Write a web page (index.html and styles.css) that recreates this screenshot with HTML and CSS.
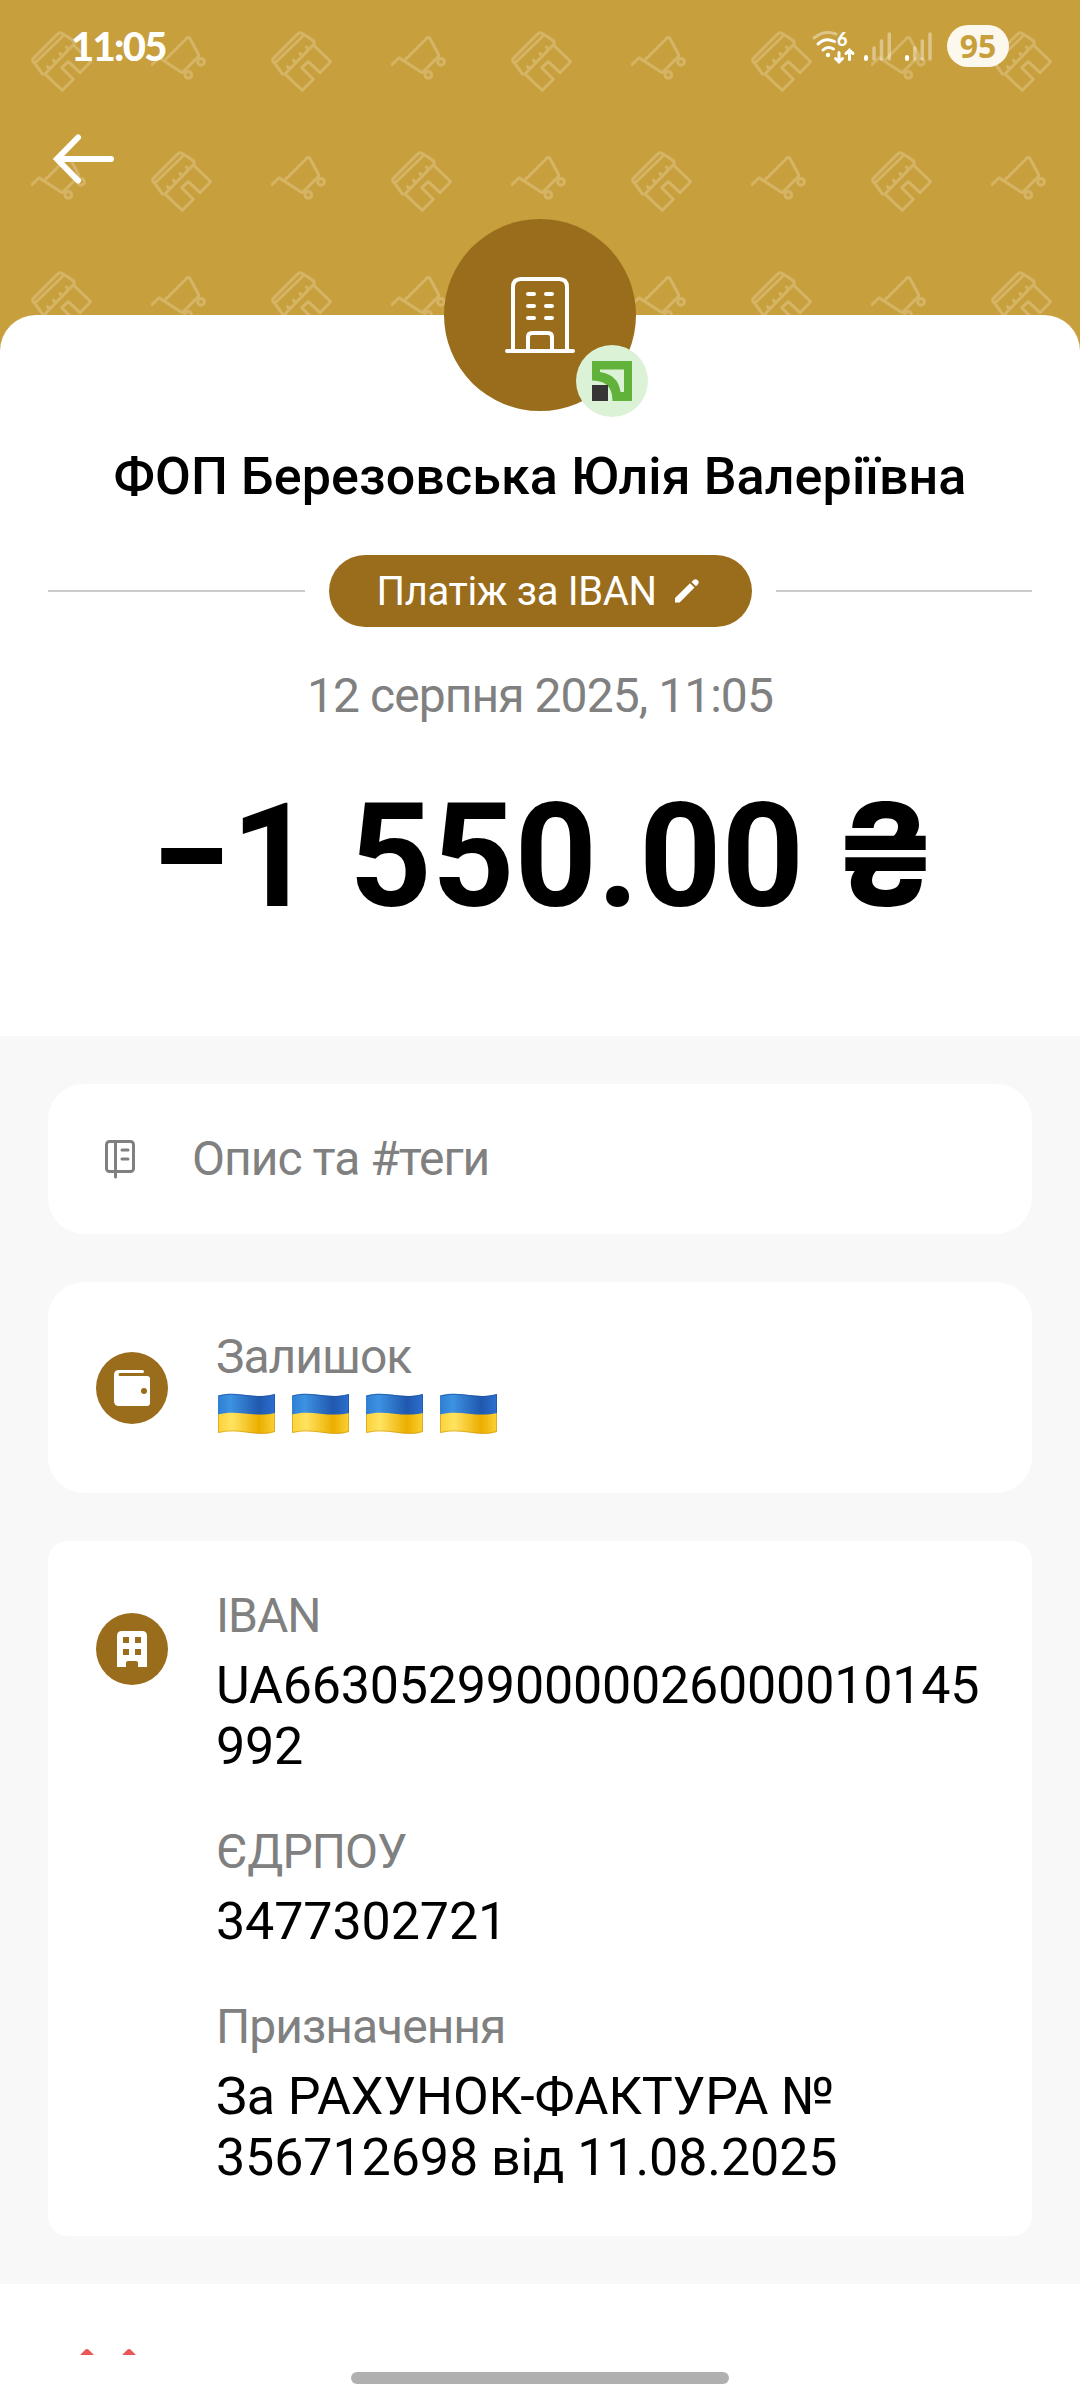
FILE: index.html
```html
<!DOCTYPE html>
<html lang="uk">

<head>
    <meta charset="utf-8">
    <meta name="viewport" content="width=device-width, initial-scale=1">
    <title>Платіж за IBAN</title>
    <link rel="stylesheet" href="styles.css">
</head>

<body>
    <div class="screen">
        <header class="header">
            <!-- repeating shops and carts -->
            <svg class="header-pattern" width="1080" height="360">
                <defs>
                    <g id="shop">
                        <path d="M33.4 58.4 58 33.8Q60 31.800 62.500 33.400L73 40.500Q75.200 42.300 73.600 44.500L45.500 73.500Q43.300 75.200 41.700 73L33 61Q32 59.800 33.400 58.400ZM35.500 62.500 64.500 34.500"/>
                        <path d="M46 75 62.300 90.300 73.300 79.300 61.700 67.700 68.300 61.700 80 72.700 90.700 61.700 74.300 45.700"/>
                        <path d="M49 68.500 47.500 66.500M55 62 53.500 60M61.500 55.500 60 53.500M68 49 66.500 47"/>
                    </g>
                    <g id="cart">
                        <path d="M152.300 64.300 159 57.700 182.300 72.700 198.500 56.500Q199 55.500 198.500 54.500L190 38.500Q188.500 36.500 187 38L164.300 60.700"/>
                        <circle cx="201" cy="61.900" r="3.300"/>
                        <circle cx="188.300" cy="74.900" r="3.300"/>
                    </g>
                    <pattern id="goods" width="240" height="240" patternUnits="userSpaceOnUse">
                        <use href="#shop"/>
                        <use href="#cart"/>
                        <use href="#shop" x="120" y="120"/>
                        <use href="#cart" x="-120" y="120"/>
                    </pattern>
                </defs>
                <rect width="1080" height="360" fill="url(#goods)"/>
            </svg>
            <div class="status">
                <span class="time">11:05</span>
                <div class="status-icons">
                    <svg width="120" height="40" viewBox="0 0 120 40" fill="none" stroke="#fff" stroke-linecap="round">
                        <path d="M2 12Q12 3.500 24 8" stroke-width="3" opacity=".4"/>
                        <path d="M6 18Q13 11 22.500 15.500M11 24Q16 19.500 21.500 23" stroke-width="3"/>
                        <circle cx="16" cy="29" r="2.200" fill="#fff" stroke="none"/>
                        <path d="M27 26.500V35.500M23.500 32.500 27 36 30.500 32.500M37.500 33.500V24M34 27.500 37.500 24 41 27.500" stroke-width="3"/>
                        <text class="wifi-gen" x="25" y="19.500">6</text>
                        <path d="M54 31V33M95 31V33" stroke-width="4"/>
                        <path d="M62 22V33M69.500 15V33M77.300 8V33M102.700 22V33M110.300 15V33M118 8V33" stroke-width="3.500" opacity=".4"/>
                    </svg>
                    <span class="battery">95</span>
                </div>
            </div>
            <svg class="back" width="62" height="50" viewBox="0 0 62 50">
                <path d="M25 3.500 4 25 25 46.500M5 25H58" fill="none" stroke="#fff" stroke-width="6" stroke-linecap="round"/>
            </svg>
        </header>

        <section class="summary">
            <div class="avatar">
                <svg width="70" height="76" viewBox="0 0 70 76" fill="none" stroke="#fff" stroke-width="4" stroke-linecap="round">
                    <path d="M8 73V10Q8 2 16 2H54Q62 2 62 10V73M23 73V60Q23 56 27 56H43Q47 56 47 60V73M2 74H68"/>
                    <path d="M23 17H29M41 17H47M23 29H29M41 29H47M23 41H29M41 41H47"/>
                </svg>
                <div class="bank">
                    <svg width="40" height="40" viewBox="0 0 40 40">
                        <path d="M0 0H40V40H20.500C20.500 27 15 20 0 19.500ZM8 8.500V11C21 13 27 20 28.500 31H32V8.500Z" fill="#60b23a" fill-rule="evenodd"/>
                        <rect y="24" width="16" height="16" fill="#373435"/>
                    </svg>
                </div>
            </div>
            <h1 class="name">ФОП Березовська Юлія Валеріївна</h1>
            <div class="category">
                <div class="tag">
                    <span>Платіж за IBAN</span>
                    <svg width="24" height="24" viewBox="0 0 24 24" fill="#fff">
                        <path d="M0 19 15 4.300 19.500 8.500 4.700 23.500H0ZM16.500 3 18.500 1Q20.700-.8 22.700 1.200T22.800 5.400L21 7.300Z"/>
                    </svg>
                </div>
            </div>
            <div class="date">12 серпня 2025, 11:05</div>
            <div class="amount">−1 550.00 <span class="currency">₴</span></div>
        </section>

        <main class="cards">
            <div class="card note">
                <svg width="32" height="40" viewBox="0 0 32 40" fill="none" stroke="#808080" stroke-width="3" stroke-linecap="round">
                    <rect x="2.500" y="2.500" width="27" height="30" rx="3"/>
                    <path d="M11.500 3V38M18 11H24M18 20H24"/>
                </svg>
                <span>Опис та #теги</span>
            </div>

            <div class="card balance">
                <div class="icon">
                    <svg width="36" height="36" viewBox="0 0 36 36">
                        <path d="M5 0H28.500Q30 0 30 1.500T28.500 3H6Q4.500 3 4.500 4.500T6 6H33Q36 6 36 9V33Q36 36 33 36H5Q0 36 0 31V5Q0 0 5 0Z" fill="#fff"/>
                        <circle cx="30" cy="21" r="3" fill="#9a6d1c"/>
                    </svg>
                </div>
                <div class="balance-text">
                    <div class="label">Залишок</div>
                    <div class="flags">
                        <svg width="0" height="0" class="defs">
                            <defs>
                                <linearGradient id="blue">
                                    <stop offset="0" stop-color="#2f7fd2"/>
                                    <stop offset=".22" stop-color="#3d92e2"/>
                                    <stop offset=".72" stop-color="#2058ae"/>
                                    <stop offset="1" stop-color="#2c70d0"/>
                                </linearGradient>
                                <linearGradient id="yellow">
                                    <stop offset="0" stop-color="#fbd23a"/>
                                    <stop offset=".25" stop-color="#ffe35f"/>
                                    <stop offset=".72" stop-color="#ebae00"/>
                                    <stop offset="1" stop-color="#fbd034"/>
                                </linearGradient>
                                <g id="flag">
                                    <path d="M0 2.500C19 -3 36 7 57 1V22H0Z" fill="url(#blue)"/>
                                    <path d="M0 21.500C19 16 36 25 57 20V39C38 45 22 34 0 40Z" fill="url(#yellow)"/>
                                    <path d="M.5 3C19 -2.500 36 7.500 56.500 1.500V20.500" fill="none" stroke="#1c4f9c" stroke-opacity=".6"/>
                                    <path d="M.5 22V39.500C22 34 38 44.500 56.500 38.500V21" fill="none" stroke="#c99414" stroke-opacity=".6"/>
                                </g>
                            </defs>
                        </svg>
                        <svg width="57" height="42"><use href="#flag"/></svg>
                        <svg width="57" height="42"><use href="#flag"/></svg>
                        <svg width="57" height="42"><use href="#flag"/></svg>
                        <svg width="57" height="42"><use href="#flag"/></svg>
                    </div>
                </div>
            </div>

            <div class="card details">
                <div class="icon">
                    <svg width="30" height="36" viewBox="0 0 30 36">
                        <path d="M5 0H25Q30 0 30 5V36H21V32Q21 30 19 30H11Q9 30 9 32V36H0V5Q0 0 5 0Z" fill="#fff"/>
                        <path d="M6 6H12V12H6ZM18 6H24V12H18ZM6 18H12V24H6ZM18 18H24V24H18Z" fill="#9a6d1c"/>
                    </svg>
                </div>
                <dl class="fields">
                    <dt>IBAN</dt>
                    <dd class="iban">UA663052990000026000010145992</dd>
                    <dt>ЄДРПОУ</dt>
                    <dd>3477302721</dd>
                    <dt>Призначення</dt>
                    <dd>За РАХУНОК-ФАКТУРА № 356712698 від 11.08.2025</dd>
                </dl>
            </div>
        </main>

        <footer class="footer">
            <!-- only the tips of the next row's icon are above the fold -->
            <svg class="peek" width="56" height="6" viewBox="0 0 56 6" fill="#eb5757">
                <path d="M0 6 5 1Q7 -1 9 1L14 6ZM42 6 47 1Q49 -1 51 1L56 6Z"/>
            </svg>
            <div class="home-bar"></div>
        </footer>
    </div>
</body>

</html>
```
FILE: styles.css
```css
body {
    margin: 0;
    font-family: Roboto, sans-serif;
    color: #000;
    background-color: #fff;
}

svg {
    display: block;
}

.screen {
    width: 1080px;
    height: 2400px;
    overflow: hidden;
    display: flex;
    flex-direction: column;
}

.header {
    position: relative;
    height: 355px;
    box-sizing: border-box;
    background-color: #c79f3c;
    flex-shrink: 0;
}

.header-pattern {
    position: absolute;
    left: 0;
    top: 0;
}

#goods {
    fill: none;
    stroke: #d5b465;
    stroke-width: 3;
    stroke-linejoin: round;
    stroke-linecap: round;
}

.status {
    position: relative;
    display: flex;
    justify-content: space-between;
    align-items: center;
    padding: 25px 71px 0 71px;
    height: 42px;
}

.time {
    font-family: Lato, sans-serif;
    font-size: 40px;
    font-weight: 900;
    letter-spacing: -1.7px;
    color: #fff;
}

.status-icons {
    display: flex;
    align-items: center;
    gap: 15px;
}

.wifi-gen {
    font: 900 18px Lato, sans-serif;
    fill: #fff;
    stroke: none;
}

.battery {
    width: 62px;
    height: 42px;
    border-radius: 21px;
    background-color: #fcf8ee;
    color: #c79f3c;
    font: 700 32px/42px "Open Sans", sans-serif;
    text-align: center;
}

.back {
    position: relative;
    margin: 67px 0 0 53px;
}

.summary {
    position: relative;
    height: 721px;
    margin-top: -40px;
    border-radius: 36px 36px 0 0;
    background-color: #fff;
    display: flex;
    flex-direction: column;
    align-items: center;
    flex-shrink: 0;
}

.avatar {
    position: relative;
    width: 192px;
    height: 192px;
    margin-top: -96px;
    border-radius: 50%;
    background-color: #9a6d1c;
    display: flex;
    justify-content: center;
    align-items: center;
    flex-shrink: 0;
}

.bank {
    position: absolute;
    right: -12px;
    bottom: -6px;
    width: 72px;
    height: 72px;
    border-radius: 50%;
    background-color: #dcf2d6;
    display: flex;
    justify-content: center;
    align-items: center;
}

.name {
    margin: 34px 0 0;
    font-size: 52px;
    line-height: 64px;
    font-weight: 500;
    letter-spacing: 0.1px;
    white-space: nowrap;
}

.category {
    display: flex;
    align-items: center;
    gap: 24px;
    width: 984px;
    margin-top: 46px;
}

.category::before,
.category::after {
    content: "";
    flex: 1;
    height: 2px;
    background-color: #ccc;
}

.tag {
    display: flex;
    align-items: center;
    gap: 18px;
    width: 423px;
    height: 72px;
    box-sizing: border-box;
    padding-left: 48px;
    border-radius: 36px;
    background-color: #9a6d1c;
    color: #fff;
    font-size: 40px;
    letter-spacing: -0.35px;
}

.date {
    margin-top: 41px;
    font-size: 48px;
    line-height: 56px;
    letter-spacing: -0.95px;
    color: #808080;
}

.amount {
    margin-top: 48px;
    padding-left: 9px;
    font-size: 144px;
    line-height: 170px;
    font-weight: 700;
    white-space: nowrap;
}

/* Roboto has no hryvnia sign */
.currency {
    margin-left: -7px;
    font-family: Inter, sans-serif;
    font-size: 142px;
    line-height: 1;
}

.cards {
    background-color: #f8f8f8;
    padding: 48px;
    display: flex;
    flex-direction: column;
    gap: 48px;
    flex-shrink: 0;
}

.card {
    background-color: #fff;
    border-radius: 36px;
    box-sizing: border-box;
    display: flex;
}

.note {
    height: 150px;
    align-items: center;
    gap: 56px;
    padding-left: 56px;
    font-size: 48px;
    line-height: 56px;
    letter-spacing: -1px;
    color: #808080;
}

.icon {
    width: 72px;
    height: 72px;
    border-radius: 50%;
    background-color: #9a6d1c;
    display: flex;
    align-items: center;
    justify-content: center;
    flex-shrink: 0;
}

.balance {
    height: 211px;
    align-items: center;
    gap: 48px;
    padding-left: 48px;
}

.balance-text {
    padding-bottom: 12px;
}

.label,
dt {
    font-size: 48px;
    line-height: 56px;
    letter-spacing: -1px;
    color: #808080;
}

.flags {
    display: flex;
    gap: 17px;
    margin: 8px 0 0 2px;
}

.defs {
    position: absolute;
}

.details {
    height: 695px;
    border-radius: 20px;
    gap: 48px;
    padding: 47px 40px 0 48px;
}

.details .icon {
    margin-top: 25px;
}

.fields {
    margin: 0;
    width: 770px;
}

dd {
    margin: 11px 0 47px;
    font-size: 52px;
    line-height: 61px;
    letter-spacing: -0.1px;
}

.iban {
    letter-spacing: -0.2px;
    word-break: break-all;
}

.footer {
    display: flex;
    flex-direction: column;
    flex: 1;
}

.peek {
    margin: 65px 0 0 80px;
}

.home-bar {
    width: 378px;
    height: 12px;
    margin: 17px auto 0;
    border-radius: 6px;
    background-color: #b0b0b0;
}
```
